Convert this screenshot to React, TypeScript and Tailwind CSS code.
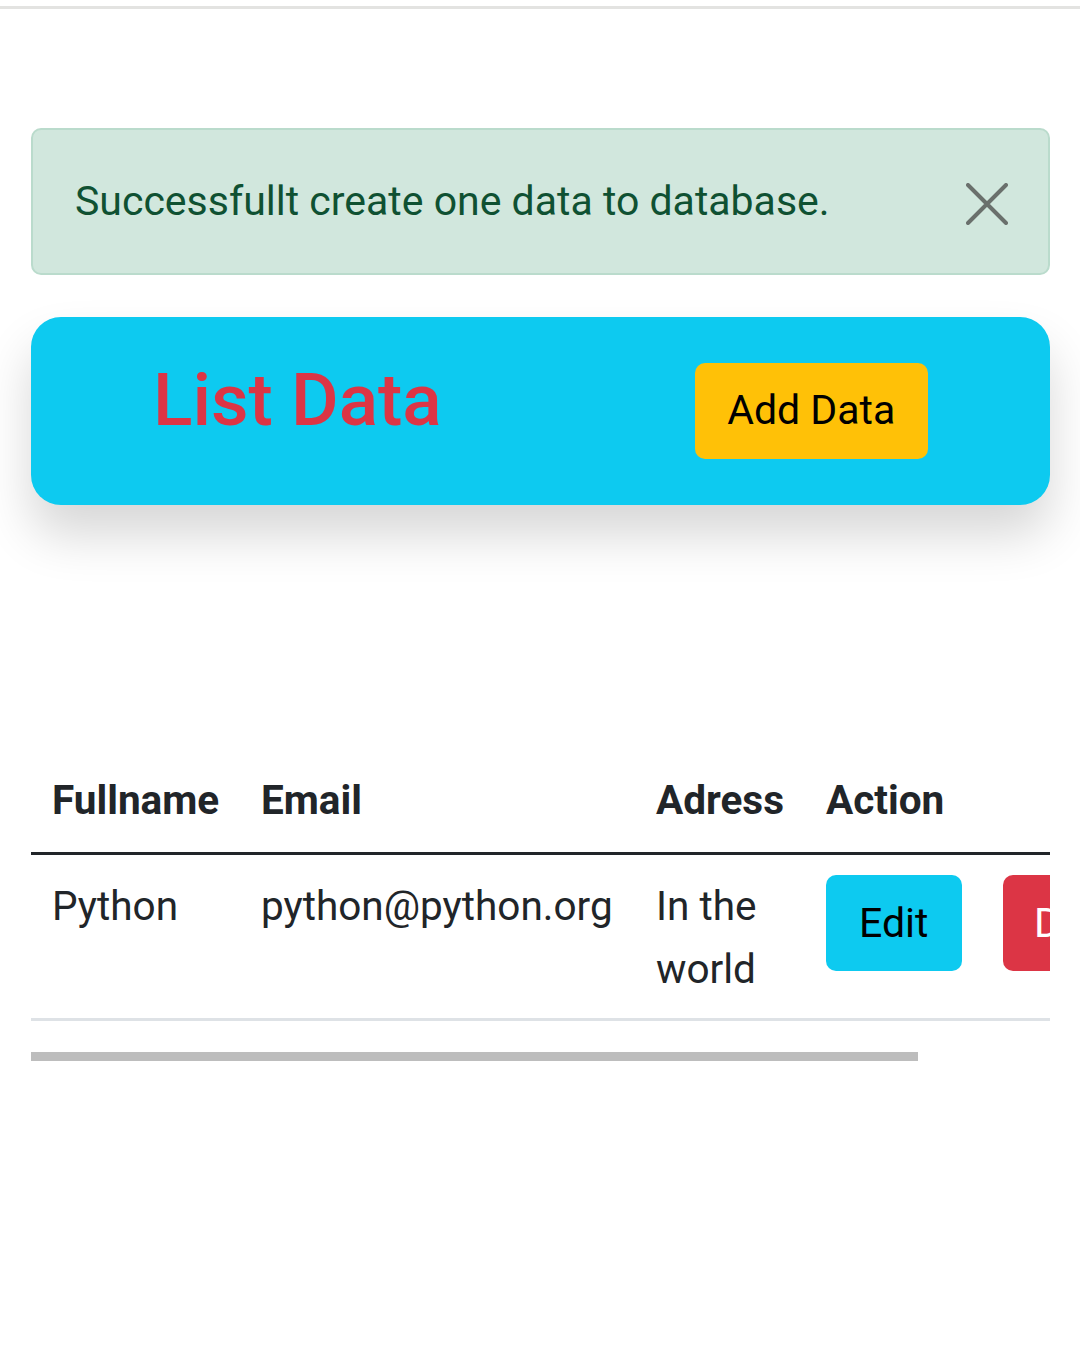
export default function App() {
  return (
    <div className="min-h-[1365px] bg-white font-['Roboto',sans-serif] text-[#212529]">
      <div className="mt-[6px] h-[3px] w-full bg-[#e3e3e1]" />

      <div className="pl-[31px] pr-[30px] pt-[119px]">
        {/* alert */}
        <div className="flex h-[147px] items-center justify-between rounded-[10px] border-[2px] border-[#badbcc] bg-[#d1e7dd] pl-[42px] pr-[40px]">
          <p className="text-[41px] leading-[63px] text-[#0f5132]">Successfullt create one data to database.</p>
          <svg width="42" height="42" viewBox="0 0 42 42" className="mt-[4px]">
            <path d="M2 2L40 40M40 2L2 40" stroke="#6a706c" strokeWidth="4" strokeLinecap="round" />
          </svg>
        </div>

        {/* header card */}
        <div className="mt-[42px] flex h-[188px] items-start rounded-[30px] bg-[#0dcaf0] pl-[122px] pt-[46px] shadow-[0_30px_50px_rgba(0,0,0,0.16)]">
          <h1 className="-mt-[10px] text-[73px] font-medium leading-[94px] text-[#dc3545]">List Data</h1>
          <button className="ml-[253px] h-[96px] w-[233px] rounded-[10px] bg-[#ffc107] text-[41px] text-black">Add Data</button>
        </div>

        {/* table */}
        <div className="mt-[243px] overflow-hidden">
          <table className="w-[1171px] table-fixed border-collapse text-left text-[40.5px] leading-[63px]">
            <colgroup>
              <col className="w-[209px]" />
              <col className="w-[395px]" />
              <col className="w-[170px]" />
              <col className="w-[397px]" />
            </colgroup>
            <thead>
              <tr className="border-b-[3px] border-[#212529]">
                <th className="p-[21px] pb-[20px] font-bold">Fullname</th>
                <th className="p-[21px] pb-[20px] font-bold">Email</th>
                <th className="p-[21px] pb-[20px] font-bold">Adress</th>
                <th className="p-[21px] pb-[20px] font-bold">Action</th>
              </tr>
            </thead>
            <tbody>
              <tr className="border-b-[3px] border-[#dee2e6]">
                <td className="p-[21px] pt-[20px] pb-[17px] align-top">Python</td>
                <td className="p-[21px] pt-[20px] pb-[17px] align-top">python@python.org</td>
                <td className="p-[21px] pt-[20px] pb-[17px] align-top">In the world</td>
                <td className="p-[21px] pt-[20px] pb-[17px] align-top">
                  <div className="flex gap-[41px] whitespace-nowrap">
                    <button className="h-[96px] w-[136px] rounded-[10px] bg-[#0dcaf0] text-[41px] text-black">Edit</button>
                    <button className="h-[96px] w-[179px] rounded-[10px] bg-[#dc3545] text-[41px] text-white">Delete</button>
                  </div>
                </td>
              </tr>
            </tbody>
          </table>
          <div className="mt-[31px] h-[9px] w-[887px] bg-[#bdbdbd]" />
        </div>
      </div>
    </div>
  );
}
